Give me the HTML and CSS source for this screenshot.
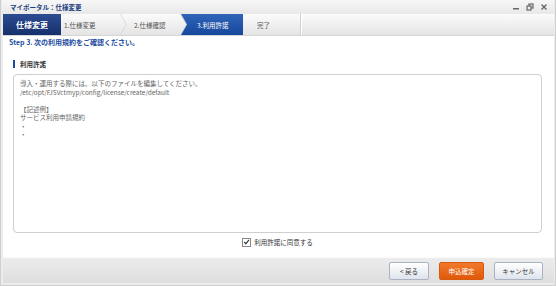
FILE: index.html
```html
<!DOCTYPE html>
<html lang="ja">
<head>
    <meta charset="UTF-8">
    <title>マイポータル：仕様変更</title>
    <link rel="stylesheet" href="styles.css">
</head>
<body>
    <div class="window">
        <div class="titlebar">
            <span class="title">マイポータル：仕様変更</span>
            <div class="win-buttons">
                <svg width="8" height="8" viewBox="0 0 8 8"><rect x="1" y="5" width="6" height="1.5" fill="#666"/></svg>
                <svg width="8" height="8" viewBox="0 0 8 8"><rect x="3" y="1" width="4" height="4" fill="none" stroke="#666" stroke-width="1.2"/><rect x="1" y="3" width="4" height="4" fill="#eee" stroke="#666" stroke-width="1.2"/></svg>
                <svg width="8" height="8" viewBox="0 0 8 8"><path d="M1.5 1.5 L6.5 6.5 M6.5 1.5 L1.5 6.5" stroke="#666" stroke-width="1.4"/></svg>
            </div>
        </div>

        <div class="steps">
            <div class="step-head">仕様変更</div>
            <div class="step first">1.仕様変更</div>
            <div class="step">2.仕様確認</div>
            <div class="step active">3.利用許諾</div>
            <div class="step last">完了</div>
            <div class="step-rest"></div>
        </div>

        <div class="content">
            <p class="step-lead">Step 3. 次の利用規約をご確認ください。</p>
            <h2 class="section">利用許諾</h2>
            <div class="terms">
                <p>導入・運用する際には、以下のファイルを編集してください。</p>
                <p>/etc/opt/FJSVctmyp/config/license/create/default</p>
                <p>&nbsp;</p>
                <p>【記述例】</p>
                <p>サービス利用申請規約</p>
                <p>・</p>
                <p>・</p>
            </div>
            <label class="agree">
                <span class="check">
                    <svg width="8" height="8" viewBox="0 0 8 8"><path d="M1.5 4 L3.3 6 L6.8 1.5" fill="none" stroke="#333" stroke-width="1.3"/></svg>
                </span>
                利用許諾に同意する
            </label>
        </div>

        <div class="footer">
            <button class="btn back">&lt; 戻る</button>
            <button class="btn primary">申込確定</button>
            <button class="btn cancel">キャンセル</button>
        </div>
    </div>
</body>
</html>
```

FILE: styles.css
```css
html, body {
    margin: 0;
    padding: 0;
}
body {
    width: 556px;
    height: 286px;
    font-family: "Noto Sans CJK JP", "Liberation Sans", sans-serif;
    font-size: 6.5px;
    color: #444;
    background: #fff;
    overflow: hidden;
}
.window {
    box-sizing: border-box;
    width: 556px;
    height: 286px;
    border: 1px solid #cfcfcf;
    border-top: none;
    background: #ececec;
    display: flex;
    flex-direction: column;
    padding: 0 1px 2px;
}
.titlebar {
    height: 14px;
    display: flex;
    align-items: center;
    justify-content: space-between;
    padding: 0 6px 0 8px;
    background: linear-gradient(#f7f7f7, #e8e8e8);
}
.title {
    color: #1d3d80;
    font-weight: bold;
    font-size: 6.5px;
}
.win-buttons {
    display: flex;
    gap: 6px;
}
.steps {
    height: 21px;
    display: flex;
    background: linear-gradient(#fbfbfb, #e4e4e4);
    border-bottom: 1px solid #d6d6d6;
    margin-left: 1px;
}
.step-head {
    width: 58px;
    display: flex;
    align-items: center;
    justify-content: center;
    color: #fff;
    font-weight: bold;
    font-size: 8px;
    background: linear-gradient(#2c4c92, #15306c);
}
.step {
    width: 66px;
    margin-right: -6px;
    display: flex;
    align-items: center;
    padding-left: 13px;
    box-sizing: border-box;
    color: #555;
    font-size: 6.5px;
    background: linear-gradient(#fbfbfb, #e4e4e4);
    clip-path: polygon(0 0, calc(100% - 6px) 0, 100% 50%, calc(100% - 6px) 100%, 0 100%, 6px 50%);
    position: relative;
}
.step.first {
    padding-left: 3px;
    clip-path: polygon(0 0, calc(100% - 6px) 0, 100% 50%, calc(100% - 6px) 100%, 0 100%);
}
.step.active {
    width: 68px;
    color: #fff;
    padding-left: 16px;
    background: linear-gradient(#2f64b8, #16489c);
}
.step.last {
    width: 58px;
    padding-left: 14px;
    color: #555;
    border-right: 1px solid #d0d0d0;
    clip-path: none;
    background: linear-gradient(#fbfbfb, #e4e4e4);
    margin-right: 0;
}
.step:not(.active):not(.last)::after {
    content: "";
    position: absolute;
    right: 0;
    top: 0;
    bottom: 0;
    width: 7px;
    background: #d2d2d2;
    clip-path: polygon(0 0, 1px 0, 7px 50%, 1px 100%, 0 100%, 6px 50%);
}
.step-rest {
    flex: 1;
    border-left: 1px solid #fff;
}
.content {
    flex: 1;
    background: #fff;
    margin-left: 1px;
    padding: 1px 12px 0 10px;
    display: flex;
    flex-direction: column;
}
.step-lead {
    margin: 0 0 0 -4px;
    color: #1a4ba0;
    font-weight: bold;
    font-size: 7px;
}
.section {
    margin: 13px 0 6px 0;
    padding-left: 5px;
    font-size: 6.5px;
    color: #333;
    font-weight: bold;
    border-left: 2px solid #1a4ba0;
    line-height: 8px;
}
.terms {
    height: 149px;
    border: 1px solid #cfcfcf;
    border-radius: 4px;
    padding: 4px 6px;
    color: #666;
    line-height: 8.5px;
}
.terms p {
    margin: 0;
}
.agree {
    display: flex;
    align-items: center;
    justify-content: center;
    gap: 3px;
    margin-top: 4px;
    color: #333;
}
.check {
    width: 7px;
    height: 7px;
    border: 1px solid #888;
    background: #fff;
    display: flex;
    align-items: center;
    justify-content: center;
}
.footer {
    height: 25px;
    margin-left: 1px;
    border-top: 1px solid #fafafa;
    background: linear-gradient(#ececec, #dedede);
    display: flex;
    align-items: center;
    justify-content: flex-end;
    gap: 10px;
    padding-right: 11px;
}
.btn {
    font-family: inherit;
    font-size: 6.5px;
    height: 18px;
    padding: 0;
    border: 1px solid #a9b3c4;
    border-radius: 2px;
    background: linear-gradient(#ffffff, #dfe4ec);
    color: #333;
}
.btn.back {
    width: 40px;
}
.btn.cancel {
    width: 49px;
}
.btn.primary {
    width: 45px;
    color: #fff;
    border-color: #d85a10;
    background: linear-gradient(#f27a2a, #e0580a);
}
```
